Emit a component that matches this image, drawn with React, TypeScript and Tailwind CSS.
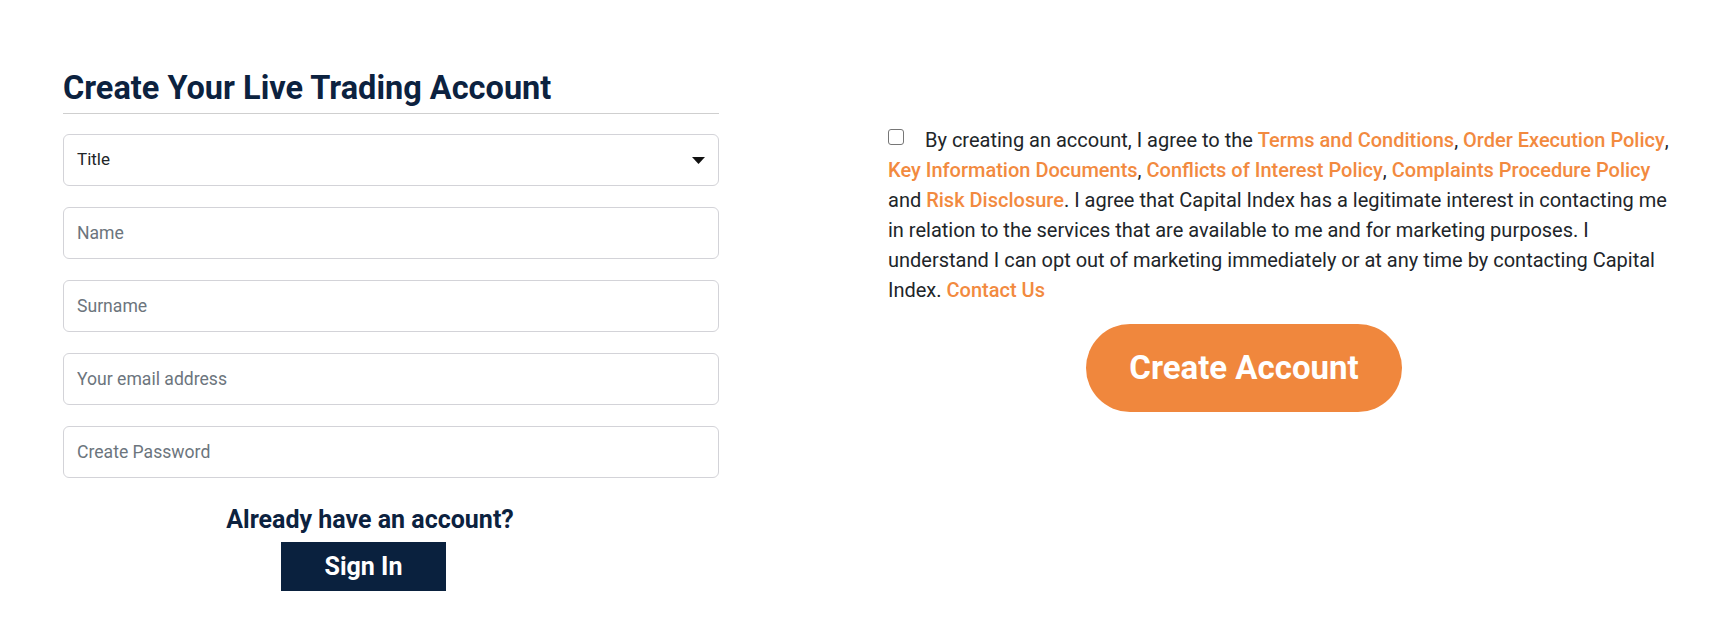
const fields = ["Name", "Surname", "Your email address", "Create Password"];

const links = {
  terms: "Terms and Conditions",
  order: "Order Execution Policy",
  kid: "Key Information Documents",
  conflicts: "Conflicts of Interest Policy",
  complaints: "Complaints Procedure Policy",
  risk: "Risk Disclosure",
  contact: "Contact Us",
};

function Link({ children }: { children: string }) {
  return <a className="font-medium text-[#f28a3f]">{children}</a>;
}

export default function App() {
  return (
    <div className="min-h-[622px] bg-white font-['Roboto',sans-serif]">
      <div className="flex pl-[63px] pt-[69px]">
        {/* left: form */}
        <div className="w-[656px]">
          <h2 className="border-b border-[#cfcfcf] pb-[6px] text-[32.5px] leading-[38px] font-bold text-[#0c223f]">
            Create Your Live Trading Account
          </h2>

          <div className="mt-[20px] flex flex-col gap-[21px]">
            <div className="flex h-[52px] items-center justify-between rounded-[6px] border border-[#d3d3d8] pl-[13px] pr-[13px]">
              <span className="text-[17px] text-[#212529]">Title</span>
              <svg width="13" height="7" viewBox="0 0 13 7">
                <path d="M0 0 H13 L6.5 7 Z" fill="#111" />
              </svg>
            </div>
            {fields.map((f) => (
              <input
                key={f}
                placeholder={f}
                className="h-[52px] w-full rounded-[6px] border border-[#d3d3d8] px-[13px] text-[17.6px] text-[#212529] outline-none placeholder:text-[#6c757d]"
              />
            ))}
          </div>

          <div className="mt-[28px] flex w-[614px] flex-col">
            <p className="text-center text-[25px] leading-[28px] font-bold text-[#0c223f]">Already have an account?</p>
            <button className="ml-[218px] mt-[8px] h-[49px] w-[165px] bg-[#0a213e] text-[25px] font-bold text-white">
              Sign In
            </button>
          </div>
        </div>

        {/* right: consent + submit */}
        <div className="ml-[169px] mt-[56px] w-[790px]">
          <p className="text-[20px] leading-[30px] text-[#212529]">
            <span className="mr-[21px] inline-block h-[16px] w-[16px] rounded-[3px] border border-[#767676] bg-white align-[2px]" />
            By creating an account, I agree to the <Link>{links.terms}</Link>, <Link>{links.order}</Link>,{" "}
            <Link>{links.kid}</Link>, <Link>{links.conflicts}</Link>, <Link>{links.complaints}</Link> and{" "}
            <Link>{links.risk}</Link>. I agree that Capital Index has a legitimate interest in contacting me in
            relation to the services that are available to me and for marketing purposes. I understand I can opt
            out of marketing immediately or at any time by contacting Capital Index. <Link>{links.contact}</Link>
          </p>
          <button className="ml-[198px] mt-[19px] h-[88px] w-[316px] rounded-full bg-[#f0873d] text-[33px] font-bold text-white">
            Create Account
          </button>
        </div>
      </div>
    </div>
  );
}
